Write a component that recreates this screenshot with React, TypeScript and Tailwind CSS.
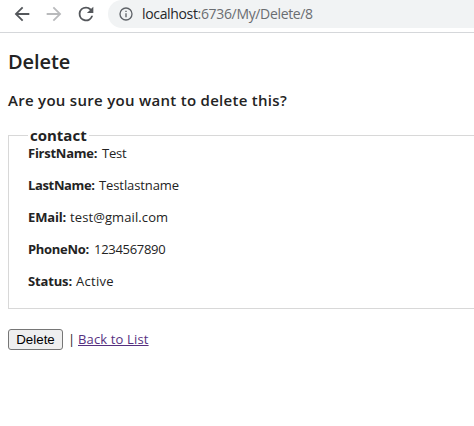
import React from "react";

const fields = [
  { label: "FirstName:", value: "Test", labelClass: "w-[75px] tracking-[-0.25px]", valueClass: "-ml-px tracking-[-0.2px]" },
  { label: "LastName:", value: "Testlastname", labelClass: "w-[71px] tracking-[-0.35px]", valueClass: "tracking-[-0.1px]" },
  { label: "EMail:", value: "test@gmail.com", labelClass: "w-[43px] tracking-[-0.15px]", valueClass: "-ml-px tracking-[0.1px]" },
  { label: "PhoneNo:", value: "1234567890", labelClass: "w-[66px] tracking-[-0.3px]", valueClass: "tracking-[-0.3px]" },
  { label: "Status:", value: "Active", labelClass: "w-[48px] tracking-[-0.15px]", valueClass: "tracking-[0.3px]" },
];

function Toolbar() {
  return (
    <header className="flex h-[33px] items-start border-b border-[#d5d7da] bg-white">
      <svg className="ml-[11px] mt-[3px] h-[22px] w-[22px] shrink-0" viewBox="0 0 24 24" fill="#54575b">
        <path d="M20 11H7.83l5.59-5.59L12 4l-8 8 8 8 1.41-1.41L7.83 13H20v-2z" />
      </svg>
      <svg className="ml-[10px] mt-[3px] h-[22px] w-[22px] shrink-0" viewBox="0 0 24 24" fill="#b9babc">
        <path d="M12 4l-1.41 1.41L16.17 11H4v2h12.17l-5.58 5.59L12 20l8-8z" />
      </svg>
      <svg className="ml-[10px] mt-[3px] h-[22px] w-[22px] shrink-0" viewBox="0 0 24 24" fill="#54575b">
        <path d="M17.65 6.35A7.96 7.96 0 0 0 12 4a8 8 0 1 0 7.73 10h-2.08A6 6 0 1 1 12 6c1.66 0 3.14.69 4.22 1.78L13 11h7V4l-2.35 2.35z" />
      </svg>
      <div className="ml-[11px] flex h-7 flex-1 items-center rounded-l-full bg-[#f1f3f4] pl-[10px]">
        <svg className="h-4 w-4 shrink-0" viewBox="0 0 24 24" fill="#5f6368">
          <path d="M11 7h2v2h-2zm0 4h2v6h-2zm1-9a10 10 0 1 0 0 20 10 10 0 0 0 0-20zm0 18a8 8 0 1 1 0-16 8 8 0 0 1 0 16z" />
        </svg>
        <span className="ml-[8px] whitespace-nowrap font-['Open_Sans',sans-serif] text-[14px] leading-7 tracking-[-0.34px] text-[#6a6d71]">
          <span className="text-[#25272a]">localhost</span>:6736/My/Delete/8
        </span>
      </div>
    </header>
  );
}

export default function App() {
  return (
    <div className="h-[426px] overflow-hidden bg-white font-['Open_Sans',sans-serif] text-[#232323]">
      <Toolbar />
      <main className="pl-2">
        <h2 className="mt-[16px] text-[20px] font-semibold leading-[26px] tracking-[-0.1px]">Delete</h2>
        <h3 className="mt-[14px] text-[15px] font-semibold leading-[22px] tracking-[0.29px]">Are you sure you want to delete this?</h3>
        <fieldset className="mt-[15px] h-[183px] border border-r-0 border-[#d8d8d8] pl-[19px]">
          <legend className="h-[18px] px-[2px] text-[15px] font-bold leading-[18px]">contact</legend>
          <div className="-mt-[1px] flex flex-col gap-3 text-[13px] leading-5">
            {fields.map((f) => (
              <div key={f.label} className="flex whitespace-nowrap">
                <span className={`${f.labelClass} font-bold`}>{f.label}</span>
                <span className={f.valueClass}>{f.value}</span>
              </div>
            ))}
          </div>
        </fieldset>
        <div className="mt-[20px] flex h-[21px] items-center text-[13px] text-[#232323]">
          <button className="h-[21px] w-[55px] rounded-[3px] border border-[#767676] bg-[#efefef] font-['Liberation_Sans',Arial,sans-serif] text-[13.333px] leading-[19px] text-black">
            Delete
          </button>
          <span className="ml-[5px] w-[10px]">|</span>
          <a className="whitespace-nowrap tracking-[0.15px] text-[#55307f] underline">Back to List</a>
        </div>
      </main>
    </div>
  );
}
